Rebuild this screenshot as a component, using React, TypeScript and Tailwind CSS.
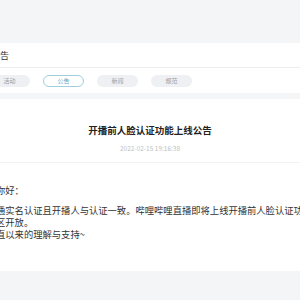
const font = { fontFamily: '"Noto Sans CJK SC", "Noto Sans", sans-serif' }

const tabs = [
  { title: "活动", active: false },
  { title: "公告", active: true },
  { title: "新闻", active: false },
  { title: "规范", active: false },
]

export default function App() {
  return (
    <div className="h-[300px] w-[300px] overflow-hidden bg-[#f4f5f7]" style={font}>
      <div className="h-[43px]" />

      <div className="flex h-[25px] items-center border-b border-[#eceef1] bg-white">
        <span className="-ml-[9px] whitespace-nowrap text-[9px] leading-none text-[#333]">公告</span>
      </div>

      <div className="flex h-[25px] items-center bg-white">
        <div className="-ml-[11px] flex gap-[13px]">
          {tabs.map((tab) => (
            <div
              key={tab.title}
              className={
                tab.active
                  ? "flex h-[12px] w-[41px] items-center justify-center rounded-full border border-[#9fcfdc] bg-white text-[6px] text-[#5aa9c6]"
                  : "flex h-[12px] w-[41px] items-center justify-center rounded-full bg-[#eef0f3] text-[6px] text-[#9a9ea6]"
              }
            >
              {tab.title}
            </div>
          ))}
        </div>
      </div>

      <div className="h-[6px]" />

      <div className="flex h-[172px] flex-col bg-white pt-[25px]">
        <h1 className="text-center text-[9.5px] font-bold leading-[12px] text-[#222]">
          开播前人脸认证功能上线公告
        </h1>
        <p className="mt-[8px] text-center text-[6.5px] leading-[8px] text-[#bcbfc4]">2022-02-15 19:16:38</p>
        <div className="mt-[10px] h-px bg-[#f1f2f4]" />

        <div className="-ml-[4px] whitespace-nowrap text-[9.3px] leading-[12px] text-[#333]">
          <p className="mt-[21px]">你好：</p>
          <p className="mt-[8px]">通实名认证且开播人与认证一致。哔哩哔哩直播即将上线开播前人脸认证功能</p>
          <p>区开放。</p>
          <p>直以来的理解与支持~</p>
        </div>
      </div>
    </div>
  )
}
